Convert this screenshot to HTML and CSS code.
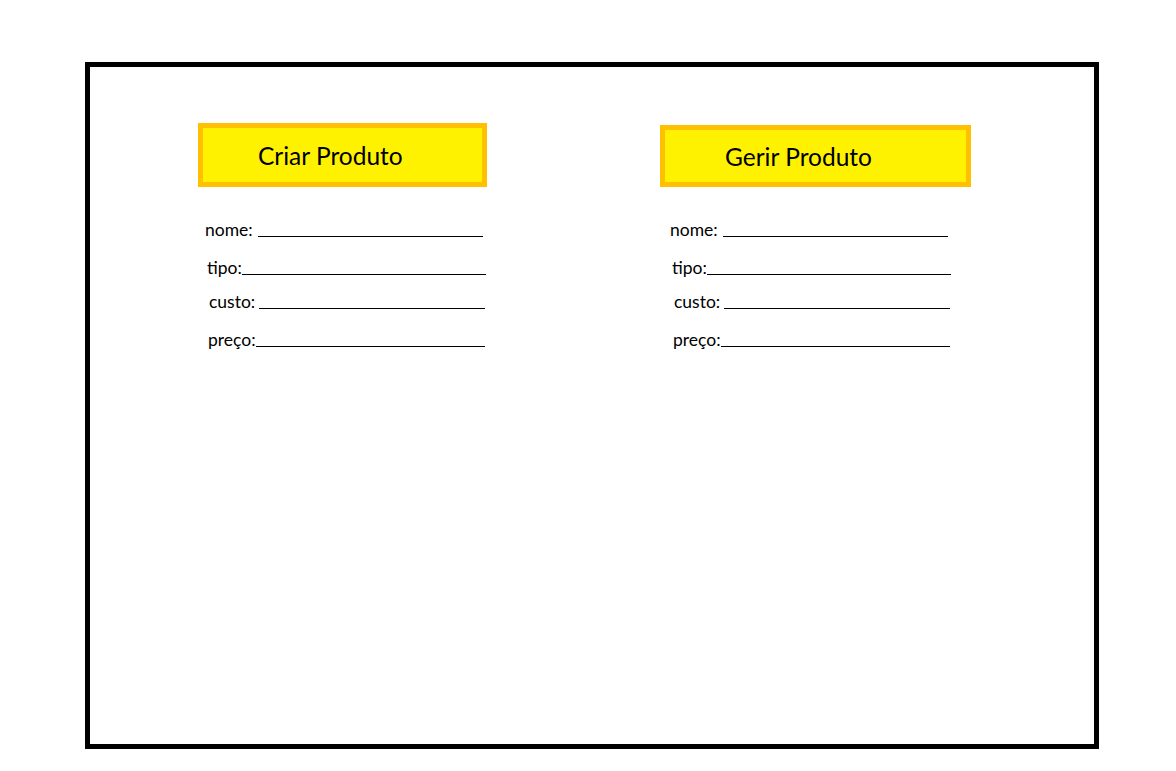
FILE: index.html
```html
<!DOCTYPE html>
<html>
<head>
<meta charset="utf-8">
<link rel="stylesheet" href="styles.css">
</head>
<body>
<div class="frame">
  <div class="col col-left">
    <div class="btn btn-left">Criar Produto</div>
    <div class="fields">
      <div class="row r-nome"><span class="lbl">nome:</span><span class="line w-nome"></span></div>
      <div class="row r-tipo"><span class="lbl">tipo:</span><span class="line w-tipo"></span></div>
      <div class="row r-custo"><span class="lbl">custo:</span><span class="line w-custo"></span></div>
      <div class="row r-preco"><span class="lbl">preço:</span><span class="line w-preco"></span></div>
    </div>
  </div>
  <div class="col col-right">
    <div class="btn btn-right">Gerir Produto</div>
    <div class="fields fields-right">
      <div class="row r-nome"><span class="lbl">nome:</span><span class="line w-nome"></span></div>
      <div class="row r-tipo"><span class="lbl">tipo:</span><span class="line w-tipo"></span></div>
      <div class="row r-custo"><span class="lbl">custo:</span><span class="line w-custo"></span></div>
      <div class="row r-preco"><span class="lbl">preço:</span><span class="line w-preco"></span></div>
    </div>
  </div>
</div>
</body>
</html>
```

FILE: styles.css
```css
html, body {
  margin: 0;
  padding: 0;
  background: #fff;
}
body {
  font-family: Lato, "Liberation Sans", sans-serif;
  color: #000;
}
.frame {
  box-sizing: border-box;
  margin: 62px 0 0 85px;
  width: 1014px;
  height: 687px;
  border: 5px solid #000;
  display: flex;
  padding-left: 108px;
  gap: 173px;
}
.col {
  display: flex;
  flex-direction: column;
}
.col-left { margin-top: 56px; }
.col-right { margin-top: 58px; }
.btn {
  box-sizing: border-box;
  border: 5px solid #ffc000;
  background: #fff200;
  font-size: 24.5px;
  display: flex;
  align-items: center;
}
.btn-left {
  width: 289px;
  height: 64px;
  padding-left: 55px;
}
.btn-right {
  width: 311px;
  height: 62px;
  padding-left: 60px;
}
.fields {
  font-size: 17.5px;
  display: flex;
  flex-direction: column;
}
.fields-right { margin-left: 3px; }
.row {
  display: flex;
  align-items: baseline;
  height: 20px;
}
.lbl { white-space: pre; }
.line {
  display: inline-block;
  border-bottom: 1px solid #000;
  height: 1px;
  position: relative;
  top: 1px;
}
.r-nome { margin-top: 32px; margin-left: 7px; }
.r-tipo { margin-top: 18px; margin-left: 9px; }
.r-custo { margin-top: 14px; margin-left: 11px; }
.r-preco { margin-top: 18px; margin-left: 10px; }
.r-nome .line { margin-left: 5px; }
.r-custo .line { margin-left: 4px; }
.w-nome { width: 225px; }
.w-tipo { width: 244px; }
.w-custo { width: 226px; }
.w-preco { width: 229px; }
```
